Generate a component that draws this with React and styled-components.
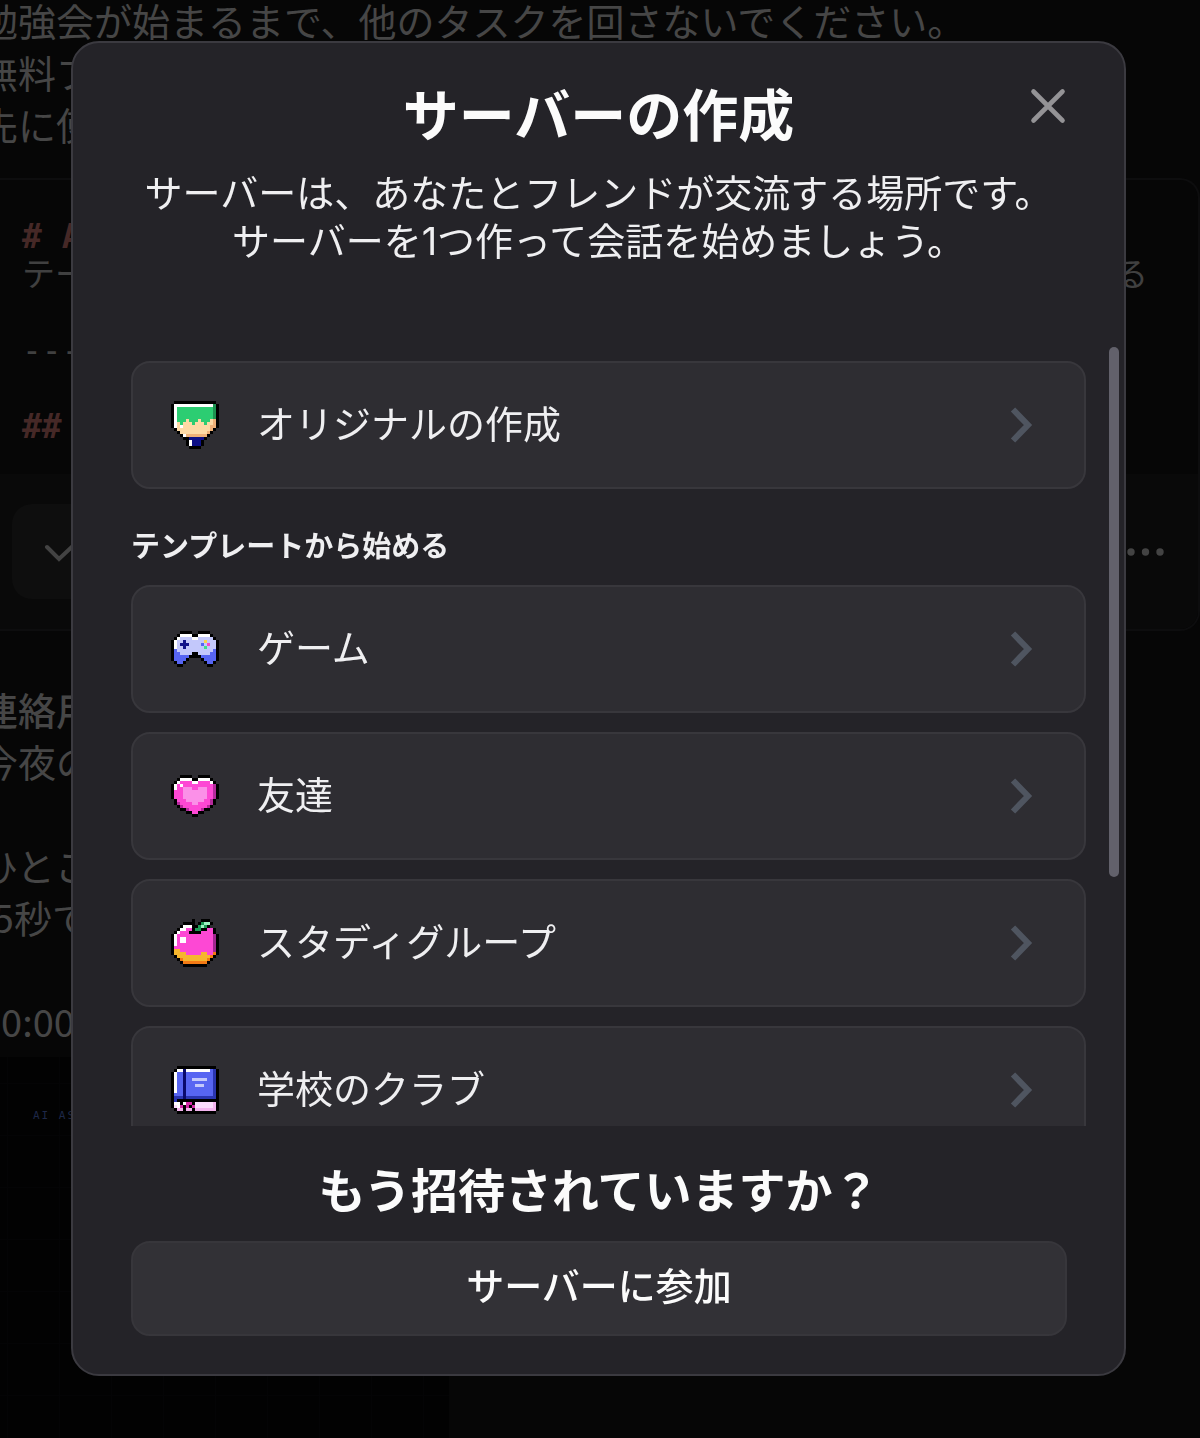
import { useState } from 'react';
import styled, { createGlobalStyle } from 'styled-components';

const GlobalStyle = createGlobalStyle`
  * {
    box-sizing: border-box;
  }

  body {
    margin: 0;
    background: #060606;
    font-family: Inter, "Noto Sans CJK JP", sans-serif;
  }

  h1, h2, h3, p {
    margin: 0;
  }

  button {
    font-family: inherit;
    cursor: pointer;
  }
`;

// page behind the dialog

const Page = styled.main`
  height: 100vh;
  overflow: hidden;
  background: #060606;
`;

const PageContent = styled.div`
  display: flex;
  flex-direction: column;
  min-height: 100%;
  margin-top: -6px;
`;

const Message = styled.div`
  margin-left: -20px;
  padding: ${({ $top }) => $top}px 0 ${({ $bottom }) => $bottom}px;
  font-family: "Noto Sans CJK JP", sans-serif;
  font-size: 38px;
  line-height: 52px;
  color: #464646;
  white-space: nowrap;
`;

const Line = styled.p`
  min-height: 52px;
  font-weight: ${({ $strong }) => ($strong ? 500 : 400)};
`;

const CodeCard = styled.section`
  flex: none;
  border: 2px solid #0d0d0e;
  border-left: 0;
  border-radius: 0 20px 20px 0;
  overflow: hidden;
`;

const Code = styled.div`
  padding: 38px 50px 28px 22px;
  font-family: "DejaVu Sans Mono", "Noto Sans CJK JP", monospace;
  font-size: 33px;
  line-height: 38px;
  color: #404040;
`;

const CodeLine = styled.p`
  display: flex;
  justify-content: space-between;
  height: 38px;
  white-space: pre;
`;

const CodeHeading = styled(CodeLine)`
  font-weight: 700;
  color: #452826;
`;

const CodeBar = styled.div`
  display: flex;
  align-items: center;
  justify-content: space-between;
  padding: 30px 30px 30px 12px;
  background: #090909;
`;

const CheckButton = styled.button`
  display: flex;
  align-items: center;
  width: 240px;
  height: 95px;
  padding: 0 0 0 32px;
  border: 0;
  border-radius: 20px;
  background: #0e0e0e;
`;

const MoreButton = styled.button`
  display: flex;
  padding: 0;
  border: 0;
  background: none;
`;

const Assistant = styled.section`
  flex: 1;
  width: 449px;
  min-height: 390px;
  padding: 50px 33px;
  background-color: #020202;
  background-image:
    linear-gradient(#040405 1px, transparent 1px),
    linear-gradient(90deg, #040405 1px, transparent 1px);
  background-size: 52px 52px;
  background-position: 7px 26px;
`;

const AssistantLabel = styled.p`
  font-family: "DejaVu Sans Mono", monospace;
  font-size: 11px;
  line-height: 18px;
  letter-spacing: 2px;
  color: #1e2848;
`;

// dialog

const Overlay = styled.div`
  position: fixed;
  inset: 0;
  display: flex;
  padding: 41px 74px 62px 71px;
`;

const Dialog = styled.div`
  position: relative;
  display: flex;
  flex: 1;
  flex-direction: column;
  min-width: 0;
  border: 2px solid #3b3a40;
  border-radius: 28px;
  background: #242328;
  overflow: hidden;
`;

const DialogHeader = styled.header`
  padding: 39px 58px 82px;
  text-align: center;
`;

const Title = styled.h1`
  margin-bottom: 19px;
  font-size: 56px;
  line-height: 68px;
  font-weight: 700;
  color: #fbfbfb;
`;

const Description = styled.p`
  font-size: 38px;
  line-height: 48px;
  color: #efeff1;
`;

const CloseButton = styled.button`
  position: absolute;
  top: 39px;
  right: 52px;
  display: flex;
  padding: 0;
  border: 0;
  background: none;
`;

const ScrollArea = styled.div`
  position: relative;
  flex: 1;
  min-height: 0;
`;

const ScrollContent = styled.div`
  height: 100%;
  padding: 14px 38px 0 58px;
  overflow-y: auto;
  scrollbar-width: none;
`;

const ScrollThumb = styled.div`
  position: absolute;
  top: 0;
  right: 5px;
  width: 10px;
  height: 68%;
  border-radius: 5px;
  background: #62616b;
`;

const SectionTitle = styled.h3`
  margin: 38px 0 18px;
  font-size: 29px;
  line-height: 40px;
  font-weight: 700;
  color: #efeff1;
`;

const TemplateList = styled.div`
  display: flex;
  flex-direction: column;
  gap: 19px;
`;

const TemplateButton = styled.button`
  display: flex;
  flex: none;
  align-items: center;
  gap: 38px;
  width: 100%;
  height: 128px;
  padding: 0 50px 0 38px;
  border: 2px solid #38373c;
  border-radius: 19px;
  background: #2e2d32;
`;

const TemplateLabel = styled.span`
  flex: 1;
  padding-bottom: 2px;
  font-size: 38px;
  line-height: 48px;
  text-align: left;
  color: #efeff1;
`;

const PixelSvg = styled.svg`
  flex: none;
  width: 48px;
  height: 48px;
`;

const DialogFooter = styled.footer`
  display: flex;
  flex-direction: column;
  gap: 21px;
  padding: 36px 57px 38px 58px;
`;

const FooterTitle = styled.h2`
  font-size: 47px;
  line-height: 58px;
  font-weight: 700;
  text-align: center;
  color: #fbfbfb;
`;

const JoinButton = styled.button`
  height: 95px;
  padding: 0 0 6px;
  border: 2px solid #37363b;
  border-radius: 19px;
  background: #323136;
  font-size: 38px;
  line-height: 48px;
  font-weight: 500;
  color: #fbfbfb;
`;

// 16x16 sprites, one letter per pixel
const sprites = {
  original: {
    colors: { k: '#000', w: '#fff', g: '#2ccd72', d: '#1d9150', p: '#fdd9a5', o: '#eeb078', n: '#0d0f86' },
    rows: [
      '.kkkkkkkkkkkkkk.',
      'kwwwwwwwwwwwwwdk',
      'kwggggggggggggdk',
      'kwggggggggggggdk',
      'kwggggggggggggdk',
      'kwggggggggggggdk',
      'kwgggpgggpgggpok',
      'kwpgpppgpppgppok',
      'kwpwpppppppppook',
      '.kpppppppppppok.',
      '..kpppppppppok..',
      '...kwoooooook...',
      '....kknnnnnk....',
      '.....kwnnnk.....',
      '.....kwnnnk.....',
      '......kkkk......',
    ],
  },
  game: {
    colors: { k: '#000', w: '#fff', l: '#c3c8fb', b: '#5765f2', n: '#12148a', y: '#fbd44b', m: '#f748c8', e: '#3fdf8c' },
    rows: [
      '................',
      '................',
      '...kkkk..kkkk...',
      '..kwwwwkkwwwwk..',
      '.kwllllwwlllllk.',
      'kwllnllllllylllk',
      'kwlnnnllllblmllk',
      'kwllnllllllelllk',
      'kbllllllllllllbk',
      'kbbllllkkllllbbk',
      'kbbbbbkkkkbbbbbk',
      'kbbbbk....kbbbbk',
      '.kbbk......kbbk.',
      '..kk........kk..',
      '................',
      '................',
    ],
  },
  friends: {
    colors: { k: '#000', w: '#fff', m: '#fd48d4', l: '#fb90e8', d: '#b52a9c' },
    rows: [
      '................',
      '...kkkk..kkkk...',
      '..kwwwwkkwwwwk..',
      '.kwmmmmwwmmmmwk.',
      'kwmwmmmmmmmmmmdk',
      'kwmmlllmmlllmmdk',
      'kmmmllllllllmmdk',
      'kmmmllllllllmmdk',
      'kmmmllllllllmmdk',
      '.kmmmllllllmmdk.',
      '.kdmmmmllmmmmdk.',
      '..kdmmmmmmmmdk..',
      '...kkdmmmmdkk...',
      '.....kkmmkk.....',
      '.......kk.......',
      '................',
    ],
  },
  study: {
    colors: { k: '#000', w: '#fff', m: '#fd48d4', d: '#a3268f', y: '#f6b62f', o: '#f47a14', g: '#1d9a56', e: '#9af0c0' },
    rows: [
      '.......k..kkk...',
      '....kkkk.kgeek..',
      '...kwwwkkgegk...',
      '..kwwmmkggkkmmk.',
      '.kwmmmkkkkmmmmk.',
      'kwmmmmmmmmmmmmdk',
      'kwmwwmmmmmmmmmdk',
      'kwmwwmmmmmmmmmdk',
      'kwmmmmmmmmmmmmdk',
      'kmmmmmmmmmmmmmdk',
      'kyymmmmmmmmmmmdk',
      'kyyyymmmmmyymmok',
      '.kyyyyyyyyyyyok.',
      '..koyyyyyyyyok..',
      '...kooooooook...',
      '....kkkkkkkk....',
    ],
  },
  club: {
    colors: { k: '#000', w: '#fff', b: '#5765f2', d: '#2a35b0', n: '#0a0a6c', l: '#c3c8fb', m: '#d42aa8', v: '#fbdcfc', p: '#f3b4ee' },
    rows: [
      '..kkkkkkkkkkkkk.',
      '.kwwnwwwwwwwwbdk',
      'kwbbnbbbbbbbbbdk',
      'kwbbnbbbbbbbbbdk',
      'kwbbnbblllllbbdk',
      'kwbbnbbbbbbbbbdk',
      'kwbbnbbblllbbbdk',
      'kwbbnbbbbbbbbbdk',
      'kwbbnbbbbbbbbbdk',
      'kbbbnbbbbbbbbbdk',
      'kdddnddddddddddk',
      'kdkkkkkkkkkkkkkk',
      'kwwkwmmkvvvvvvpk',
      'kvwmkmkmvvvvvvpk',
      '.kppkppkpppppppk',
      '..kkkkkkkkkkkkk.',
    ],
  },
};

const templates = [
  { id: 'game', label: 'ゲーム' },
  { id: 'friends', label: '友達' },
  { id: 'study', label: 'スタディグループ' },
  { id: 'club', label: '学校のクラブ' },
];

function PixelIcon({ name }) {
  const { colors, rows } = sprites[name];
  return (
    <PixelSvg viewBox="0 0 16 16" shapeRendering="crispEdges" aria-hidden="true">
      {rows.map((row, y) =>
        row.split('').map((c, x) =>
          colors[c] ? <rect key={`${x}-${y}`} x={x} y={y} width="1" height="1" fill={colors[c]} /> : null
        )
      )}
    </PixelSvg>
  );
}

function Template({ icon, label }) {
  return (
    <TemplateButton type="button">
      <PixelIcon name={icon} />
      <TemplateLabel>{label}</TemplateLabel>
      <svg width="24" height="38" viewBox="0 0 24 38" fill="none" aria-hidden="true">
        <path d="M3 3.5 18 19 3 34.5" stroke="#4f5560" strokeWidth="6" />
      </svg>
    </TemplateButton>
  );
}

export default function App() {
  const [open, setOpen] = useState(true);

  return (
    <>
      <GlobalStyle />
      <Page>
        <PageContent>
          <Message $top={0} $bottom={28}>
            <Line>勉強会が始まるまで、他のタスクを回さないでください。</Line>
            <Line>無料プ</Line>
            <Line>先に使</Line>
          </Message>
          <CodeCard>
            <Code>
              <CodeHeading># A</CodeHeading>
              <CodeLine><span>テー</span><span>る</span></CodeLine>
              <CodeLine />
              <CodeLine>---</CodeLine>
              <CodeLine />
              <CodeHeading>##</CodeHeading>
            </Code>
            <CodeBar>
              <CheckButton type="button" aria-label="完了">
                <svg width="34" height="24" viewBox="0 0 34 24" fill="none">
                  <path d="M3 7 15 19 32 3" stroke="#434343" strokeWidth="4" strokeLinecap="round" />
                </svg>
              </CheckButton>
              <MoreButton type="button" aria-label="その他">
                <svg width="42" height="8" viewBox="0 0 42 8" fill="#434343">
                  <circle cx="5" cy="4" r="3.7" />
                  <circle cx="19.5" cy="4" r="3.7" />
                  <circle cx="34" cy="4" r="3.7" />
                </svg>
              </MoreButton>
            </CodeBar>
          </CodeCard>
          <Message $top={52} $bottom={10}>
            <Line $strong>連絡用</Line>
            <Line>今夜の</Line>
            <Line />
            <Line>ひとこ</Line>
            <Line>(5秒で</Line>
            <Line />
            <Line>10:00</Line>
          </Message>
          <Assistant>
            <AssistantLabel>AI AS</AssistantLabel>
          </Assistant>
        </PageContent>
      </Page>

      {open && (
        <Overlay>
          <Dialog role="dialog" aria-modal="true" aria-labelledby="dialog-title">
            <DialogHeader>
              <Title id="dialog-title">サーバーの作成</Title>
              <Description>
                サーバーは、あなたとフレンドが交流する場所です。
                <br />
                サーバーを1つ作って会話を始めましょう。
              </Description>
            </DialogHeader>
            <CloseButton type="button" aria-label="閉じる" onClick={() => setOpen(false)}>
              <svg width="48" height="48" viewBox="0 0 48 48" fill="none">
                <path d="M9.5 9.5 38.5 38.5M38.5 9.5 9.5 38.5" stroke="#949396" strokeWidth="4.6" strokeLinecap="round" />
              </svg>
            </CloseButton>
            <ScrollArea>
              <ScrollContent>
                <Template icon="original" label="オリジナルの作成" />
                <SectionTitle>テンプレートから始める</SectionTitle>
                <TemplateList>
                  {templates.map((t) => (
                    <Template key={t.id} icon={t.id} label={t.label} />
                  ))}
                </TemplateList>
              </ScrollContent>
              <ScrollThumb />
            </ScrollArea>
            <DialogFooter>
              <FooterTitle>もう招待されていますか？</FooterTitle>
              <JoinButton type="button">サーバーに参加</JoinButton>
            </DialogFooter>
          </Dialog>
        </Overlay>
      )}
    </>
  );
}
